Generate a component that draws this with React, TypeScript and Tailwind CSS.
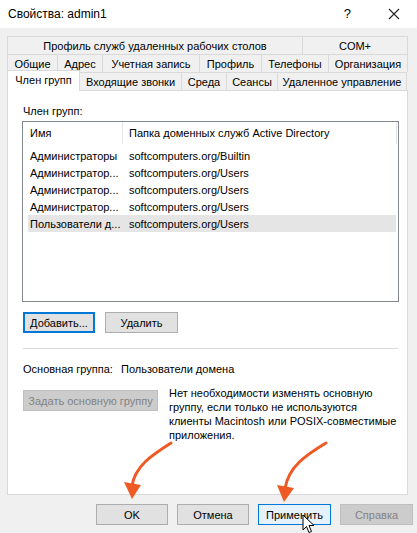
import React from "react";

const row1 = [
  { label: "Профиль служб удаленных рабочих столов", w: "w-[295px]" },
  { label: "COM+", w: "w-[105px]" },
];

const row2 = [
  { label: "Общие", w: "w-[50px]" },
  { label: "Адрес", w: "w-[45px]" },
  { label: "Учетная запись", w: "w-[97px]" },
  { label: "Профиль", w: "w-[62px]" },
  { label: "Телефоны", w: "w-[67px]" },
  { label: "Организация", w: "w-[79px]" },
];

const row3 = [
  { label: "Входящие звонки", w: "w-[102px]" },
  { label: "Среда", w: "w-[45px]" },
  { label: "Сеансы", w: "w-[51px]" },
  { label: "Удаленное управление", w: "w-[129px]" },
];

const members = [
  { name: "Администраторы", path: "softcomputers.org/Builtin" },
  { name: "Администратор...", path: "softcomputers.org/Users" },
  { name: "Администратор...", path: "softcomputers.org/Users" },
  { name: "Администратор...", path: "softcomputers.org/Users" },
  { name: "Пользователи д...", path: "softcomputers.org/Users", selected: true },
];

function Tab({ label, w }: { label: string; w: string }) {
  return (
    <div
      className={`${w} flex h-[18px] shrink-0 items-center justify-center border-t border-r border-[#d9d9d9] bg-[#f0f0f0] text-[#000]`}
    >
      {label}
    </div>
  );
}

function Btn({
  children,
  w = "w-[72px]",
  variant = "normal",
}: {
  children: React.ReactNode;
  w?: string;
  variant?: "normal" | "focus" | "default" | "disabled";
}) {
  const styles = {
    normal: "border border-[#adadad] bg-[#e1e1e1] text-black",
    focus: "border-2 border-[#0078d7] bg-[#e1e1e1] text-black",
    default: "border border-[#0078d7] bg-[#e5f1fb] text-black",
    disabled: "border border-[#bfbfbf] bg-[#cccccc] text-[#838383]",
  }[variant];
  return (
    <div className={`${w} ${styles} flex h-[21px] shrink-0 items-center justify-center`}>{children}</div>
  );
}

export default function App() {
  return (
    <div
      className="relative h-[533px] w-[417px] overflow-hidden bg-[#f0f0f0] text-[11px] leading-[14px] text-black"
      style={{ fontFamily: '"Liberation Sans", Arial, sans-serif' }}
    >
      {/* title bar */}
      <div className="flex h-[28px] items-center bg-white pl-[8px] text-[12px]">
        <span>Свойства: admin1</span>
        <span className="ml-auto mr-[37px] text-[13px]">?</span>
        <svg width="12" height="12" viewBox="0 0 12 12" className="mr-[17px]">
          <path d="M1 1 L11 11 M11 1 L1 11" stroke="#222" strokeWidth="1.1" />
        </svg>
      </div>

      {/* tabs */}
      <div className="ml-[7px] mt-[8px] w-[401px]">
        <div className="flex border-l border-[#d9d9d9]">
          {row1.map((t) => (
            <Tab key={t.label} {...t} />
          ))}
        </div>
        <div className="flex border-l border-[#d9d9d9]">
          {row2.map((t) => (
            <Tab key={t.label} {...t} />
          ))}
        </div>
        <div className="relative z-10 flex h-[18px] items-end">
          <div className="-mb-px flex h-[21px] w-[73px] shrink-0 items-center justify-center border-x border-t border-[#d9d9d9] bg-white pb-[2px]">
            Член групп
          </div>
          {row3.map((t) => (
            <Tab key={t.label} {...t} />
          ))}
        </div>

        {/* panel */}
        <div className="h-[405px] border border-[#d9d9d9] bg-white pl-[14px] pt-[13px]">
          <div className="pl-[1px]">Член групп:</div>
          <div className="mt-[3px] h-[181px] w-[377px] border border-[#828790] bg-white">
            <div className="flex h-[22px] items-center">
              <div className="flex h-full w-[100px] items-center border-r border-[#e5e5e5] pl-[7px]">Имя</div>
              <div className="flex h-full w-[274px] items-center border-r border-[#e5e5e5] pl-[6px]">
                Папка доменных служб Active Directory
              </div>
            </div>
            <div className="pt-[3px]">
              {members.map((m, i) => (
                <div
                  key={i}
                  className={`ml-[5px] mr-[2px] flex h-[17px] items-center ${m.selected ? "bg-[#e5e5e5]" : ""}`}
                >
                  <div className="w-[95px] truncate pl-[2px]">{m.name}</div>
                  <div className="pl-[6px]">{m.path}</div>
                </div>
              ))}
            </div>
          </div>

          <div className="mt-[10px] flex gap-[10px] pl-[1px]">
            <Btn variant="focus">Добавить...</Btn>
            <Btn w="w-[73px]">Удалить</Btn>
          </div>

          <div className="ml-[1px] mt-[15px] h-px w-[375px] bg-[#d9d9d9]" />

          <div className="mt-[13px] flex pl-[1px]">
            <span className="w-[98px]">Основная группа:</span>
            <span>Пользователи домена</span>
          </div>

          <div className="mt-[10px] flex items-start gap-[11px] pl-[1px]">
            <div className="mt-[4px]">
              <Btn w="w-[135px]" variant="disabled">
                Задать основную группу
              </Btn>
            </div>
            <p className="w-[230px]">
              Нет необходимости изменять основную группу, если только не используются клиенты Macintosh или
              POSIX-совместимые приложения.
            </p>
          </div>
        </div>
      </div>

      {/* bottom buttons */}
      <div className="mt-[9px] flex gap-[9px] pl-[96px]">
        <Btn>OK</Btn>
        <Btn>Отмена</Btn>
        <Btn w="w-[73px]" variant="default">
          Применить
        </Btn>
        <Btn w="w-[73px]" variant="disabled">
          Справка
        </Btn>
      </div>

      {/* annotation arrows */}
      <svg className="pointer-events-none absolute left-0 top-0" width="417" height="533" viewBox="0 0 417 533">
        <g fill="none" stroke="#ef5a24" strokeWidth="3" strokeLinecap="round">
          <path d="M171 443 C152 455 135 466 132 486" />
          <path d="M326 443 C306 455 288 467 285 489" />
        </g>
        <g fill="#ef5a24">
          <polygon points="124,482 141,485 132,499" />
          <polygon points="277,485 294,488 284,502" />
        </g>
      </svg>

      {/* mouse cursor */}
      <svg className="pointer-events-none absolute left-[302px] top-[514px]" width="14" height="20" viewBox="0 0 14 20">
        <path d="M1 1 L1 16 L4.5 12.5 L7 18.5 L9.5 17.5 L7 11.5 L12 11.5 Z" fill="#fff" stroke="#000" strokeWidth="1" />
      </svg>
    </div>
  );
}
